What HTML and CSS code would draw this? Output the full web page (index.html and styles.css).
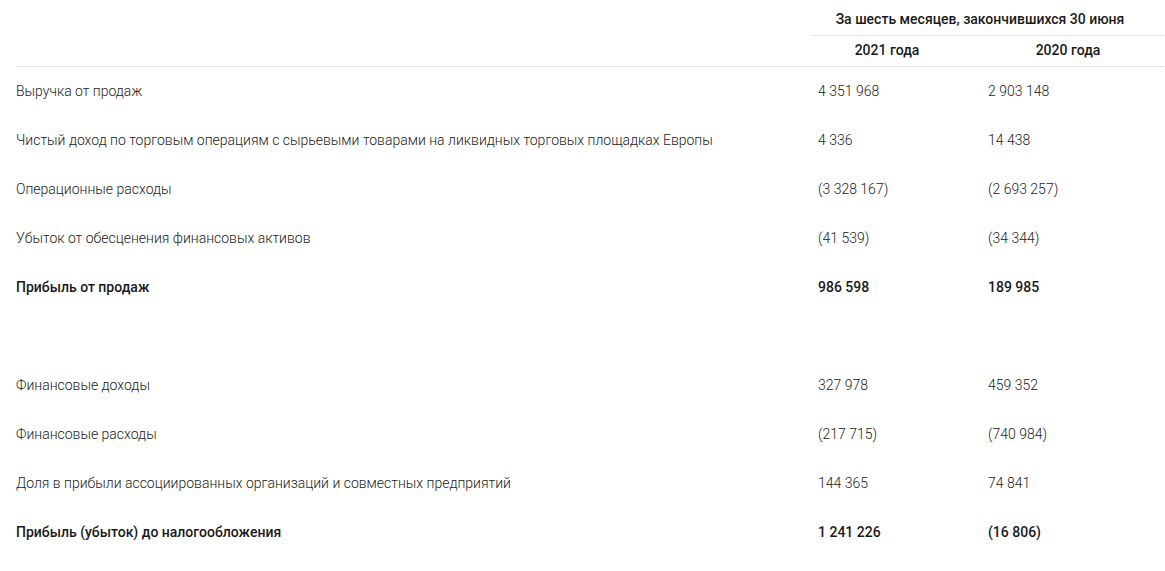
FILE: index.html
```html
<!DOCTYPE html>
<html lang="ru">
  <head>
    <meta charset="UTF-8" />
    <meta name="viewport" content="width=device-width, initial-scale=1.0" />
    <title>Отчет о прибылях и убытках</title>
    <link rel="stylesheet" href="styles.css">
  </head>
  <body>
    <table class="report">
      <colgroup>
        <col class="col-label" />
        <col class="col-num" />
        <col class="col-num2" />
      </colgroup>
      <thead>
        <tr class="period-row">
          <th></th>
          <th colspan="2" class="period">За шесть месяцев, закончившихся 30 июня</th>
        </tr>
        <tr class="year-row">
          <th></th>
          <th class="year year-1">2021 года</th>
          <th class="year year-2">2020 года</th>
        </tr>
      </thead>
      <tbody>
        <tr>
          <td>Выручка от продаж</td>
          <td>4 351 968</td>
          <td>2 903 148</td>
        </tr>
        <tr>
          <td>Чистый доход по торговым операциям с сырьевыми товарами на ликвидных торговых площадках Европы</td>
          <td>4 336</td>
          <td>14 438</td>
        </tr>
        <tr>
          <td>Операционные расходы</td>
          <td>(3 328 167)</td>
          <td>(2 693 257)</td>
        </tr>
        <tr>
          <td>Убыток от обесценения финансовых активов</td>
          <td>(41 539)</td>
          <td>(34 344)</td>
        </tr>
        <tr class="total">
          <td>Прибыль от продаж</td>
          <td>986 598</td>
          <td>189 985</td>
        </tr>
        <tr class="spacer">
          <td></td>
          <td></td>
          <td></td>
        </tr>
        <tr>
          <td>Финансовые доходы</td>
          <td>327 978</td>
          <td>459 352</td>
        </tr>
        <tr>
          <td>Финансовые расходы</td>
          <td>(217 715)</td>
          <td>(740 984)</td>
        </tr>
        <tr>
          <td>Доля в прибыли ассоциированных организаций и совместных предприятий</td>
          <td>144 365</td>
          <td>74 841</td>
        </tr>
        <tr class="total">
          <td>Прибыль (убыток) до налогообложения</td>
          <td>1 241 226</td>
          <td>(16 806)</td>
        </tr>
      </tbody>
    </table>
  </body>
</html>
```

FILE: styles.css
```css
body {
  margin: 0;
  padding: 0 1px 0 16px;
  background-color: #fff;
  font-family: Roboto, "Liberation Sans", Arial, sans-serif;
  font-size: 14px;
  line-height: 16px;
  color: #222;
}
.report {
  width: 100%;
  border-collapse: collapse;
  table-layout: fixed;
}
.col-label {
  width: 796px;
}
.col-num {
  width: 170px;
}
th {
  font-weight: 500;
  color: #1a1a1a;
  padding: 0;
}
.period-row th {
  padding: 11px 0 8px;
}
.period {
  text-align: center;
  padding-right: 16px !important;
  border-bottom: 1px solid #e4e4e4;
}
.year-row th {
  padding: 6px 0 8px;
  border-bottom: 1px solid #e4e4e4;
}
.year-1 {
  text-align: center;
  padding-right: 20px !important;
}
.year-2 {
  text-align: center;
  padding-right: 10px !important;
}
td {
  height: 47px;
  padding: 0 0 2px;
  vertical-align: middle;
  font-weight: 300;
}
td + td {
  padding-left: 6px;
}
.total td {
  font-weight: 500;
  color: #1a1a1a;
}
```
